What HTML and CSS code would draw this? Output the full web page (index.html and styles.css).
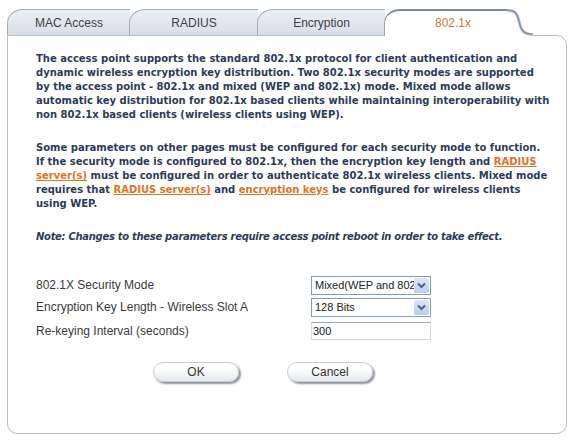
FILE: index.html
```html
<!DOCTYPE html>
<html lang="en">
<head>
  <meta charset="UTF-8" />
  <title>802.1x</title>
  <link rel="stylesheet" href="styles.css">
</head>
<body>
  <div class="frame">
    <div class="tabs">
      <div class="tab first">MAC Access</div>
      <div class="tab">RADIUS</div>
      <div class="tab">Encryption</div>
      <div class="tab active">802.1x</div>
      <svg class="tab-curve" width="26" height="27" viewBox="0 0 26 27">
        <path d="M0 1 C8 1 10 4 12 12 C14 22 17 25.5 26 25.5 L26 27 L0 27 Z" fill="#fff"/>
        <path d="M0 1.5 C8 1.5 10 4 12 12 C14 22 17 25.5 26 25.5" fill="none" stroke="#b9c1cf" stroke-width="3"/>
        <path d="M0 1 C8 1 10 4 12 12 C14 22 17 25 26 25" fill="none" stroke="#7f8ba0" stroke-width="1.2"/>
      </svg>
      <div class="tab-rest"></div>
    </div>

    <div class="panel">
      <p class="info">The access point supports the standard 802.1x protocol for client authentication and<br>
        dynamic wireless encryption key distribution. Two 802.1x security modes are supported<br>
        by the access point - 802.1x and mixed (WEP and 802.1x) mode. Mixed mode allows<br>
        automatic key distribution for 802.1x based clients while maintaining interoperability with<br>
        non 802.1x based clients (wireless clients using WEP).</p>

      <p class="info">Some parameters on other pages must be configured for each security mode to function.<br>
        If the security mode is configured to 802.1x, then the encryption key length and <a href="#">RADIUS<br>
        server(s)</a> must be configured in order to authenticate 802.1x wireless clients. Mixed mode<br>
        requires that <a href="#">RADIUS server(s)</a> and <a href="#">encryption keys</a> be configured for wireless clients<br>
        using WEP.</p>

      <p class="note">Note: Changes to these parameters require access point reboot in order to take effect.</p>

      <div class="form">
        <div class="row">
          <span class="label">802.1X Security Mode</span>
          <div class="select">
            <span class="value">Mixed(WEP and 802.1x)</span>
            <span class="arrow">
              <svg width="9" height="7" viewBox="0 0 9 7"><path d="M1 1.5 L4.5 5 L8 1.5" fill="none" stroke="#4d6185" stroke-width="2"/></svg>
            </span>
          </div>
        </div>
        <div class="row">
          <span class="label">Encryption Key Length - Wireless Slot A</span>
          <div class="select">
            <span class="value">128 Bits</span>
            <span class="arrow">
              <svg width="9" height="7" viewBox="0 0 9 7"><path d="M1 1.5 L4.5 5 L8 1.5" fill="none" stroke="#4d6185" stroke-width="2"/></svg>
            </span>
          </div>
        </div>
        <div class="row">
          <span class="label">Re-keying Interval (seconds)</span>
          <input class="text-input" type="text" value="300">
        </div>
      </div>

      <div class="buttons">
        <button class="btn">OK</button>
        <button class="btn">Cancel</button>
      </div>
    </div>
  </div>
</body>
</html>
```

FILE: styles.css
```css
body {
  margin: 0;
  background-color: #fff;
  font-family: "Liberation Sans", Arial, sans-serif;
  color: #333;
}
.frame {
  width: 560px;
  margin: 9px 0 0 7px;
}
.tabs {
  position: relative;
  z-index: 1;
  display: flex;
  height: 27px;
  margin-bottom: -1px;
}
.tab {
  box-sizing: border-box;
  height: 26px;
  margin-left: -1px;
  padding-top: 6px;
  text-align: center;
  font-size: 12px;
  color: #3a3f48;
  background: linear-gradient(#eceff4, #d8dee8);
  border-top: 1px solid #a3adbd;
  border-left: 1px solid #a3adbd;
  border-top-left-radius: 16px 14px;
}
.tab.first {
  margin-left: 0;
  width: 123px;
}
.tab:nth-child(2) { width: 129px; }
.tab:nth-child(3) { width: 128px; }
.tab.active {
  width: 123px;
  height: 27px;
  padding: 5px 0 0 14px;
  color: #d2772a;
  background: #fff;
  border-top: 2px solid #7f8ba0;
  border-left: 1px solid #9aa5b8;
}
.tab-curve {
  display: block;
  flex: none;
}
.tab-rest {
  flex: 1;
}
.panel {
  box-sizing: border-box;
  height: 399px;
  padding: 16px 0 0 28px;
  border: 1px solid #b5bdca;
  border-radius: 0 10px 10px 10px;
}
.info {
  margin: 0 0 19px;
  width: 530px;
  font-family: "DejaVu Sans", Verdana, sans-serif;
  font-size: 10px;
  line-height: 14px;
  font-weight: bold;
  color: #2d3b5a;
}
.info a {
  color: #e2731c;
}
.note {
  margin: 0;
  font-family: "DejaVu Sans", Verdana, sans-serif;
  font-size: 10px;
  line-height: 14px;
  font-weight: bold;
  font-style: italic;
  letter-spacing: -0.3px;
  color: #2d3b5a;
}
.form {
  margin-top: 32px;
  display: flex;
  flex-direction: column;
  gap: 4px;
}
.row {
  display: flex;
  align-items: center;
  height: 18px;
}
.row:nth-child(3) {
  margin-top: 2px;
}
.label {
  width: 275px;
  font-size: 12px;
  color: #3a3a3a;
}
.select {
  box-sizing: border-box;
  display: flex;
  align-items: center;
  width: 120px;
  height: 19px;
  border: 1px solid #7f9db9;
  background: #fff;
}
.select .value {
  flex: 1;
  overflow: hidden;
  white-space: nowrap;
  padding-left: 3px;
  font-size: 11px;
  color: #222;
}
.select .arrow {
  display: flex;
  align-items: center;
  justify-content: center;
  width: 15px;
  height: 15px;
  margin-right: 1px;
  border-radius: 2px;
  background: linear-gradient(#dbe6fb, #b9cdf2);
}
.text-input {
  box-sizing: border-box;
  width: 120px;
  height: 18px;
  padding: 0 1px;
  border: 1px solid #d5d9e0;
  border-top-color: #a0a6b0;
  font-family: "Liberation Sans", Arial, sans-serif;
  font-size: 11px;
  color: #111;
}
.buttons {
  display: flex;
  gap: 48px;
  margin: 22px 0 0 117px;
}
.btn {
  width: 86px;
  height: 20px;
  padding: 0;
  border: 1px solid #c8ccd3;
  border-radius: 10px;
  background: linear-gradient(#ffffff 30%, #e6e8ec);
  box-shadow: 2px 2px 2px #8d939c;
  font-family: "Liberation Sans", Arial, sans-serif;
  font-size: 12px;
  color: #333;
}
```
